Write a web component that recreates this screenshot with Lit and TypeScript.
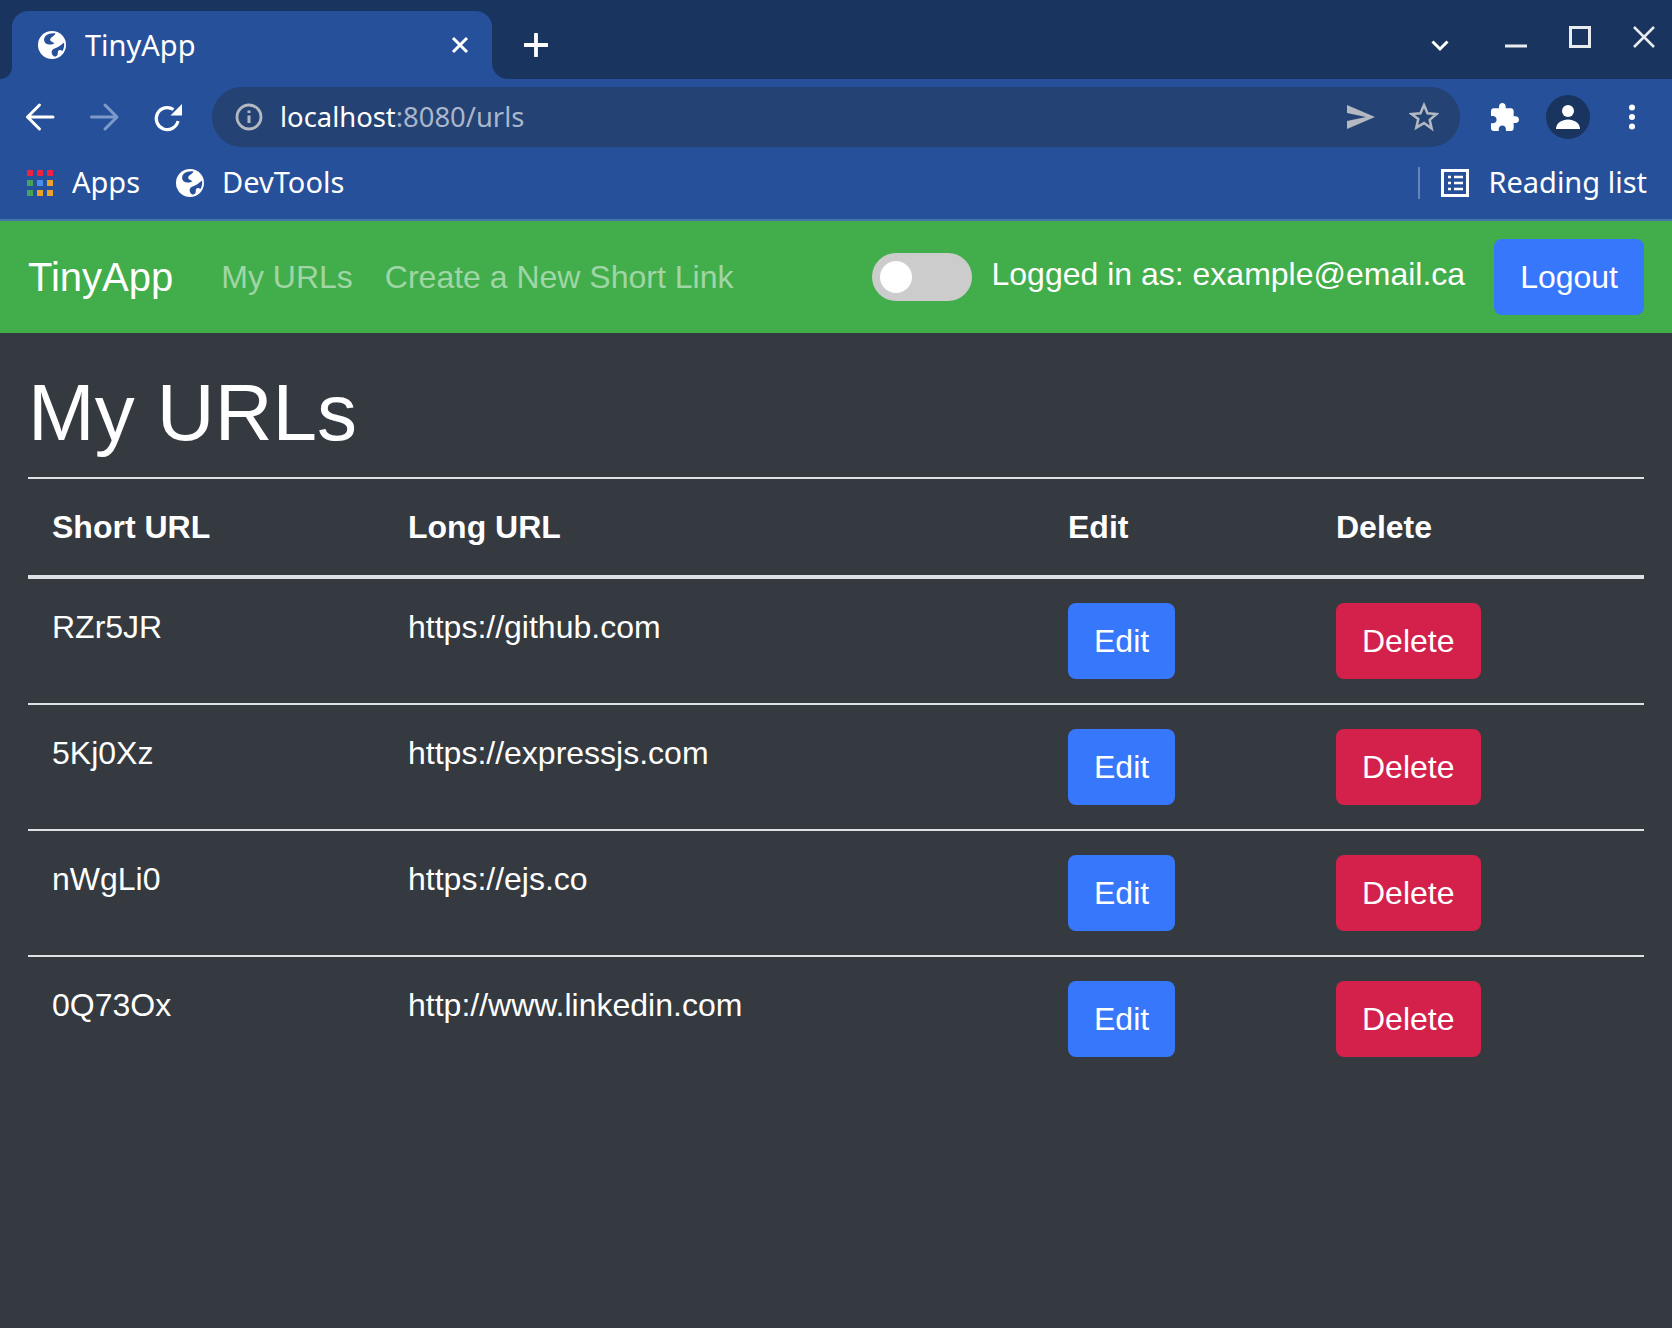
import { LitElement, html, css, svg } from "lit";
import { customElement } from "lit/decorators.js";

const globe = svg`<circle cx="14" cy="14" r="14" fill="#fff"/><path fill="#27509a" d="M8 4.500C10.500 2.600 14 1.800 17.500 2.300 17 4 15.500 5 14 6c-2 1.300-2.500 3-1 4.200 1 .8 2.500 1.100 3.500 2.100-2.500 1.700-6.500 1.700-8.500.2-2.500-2-2.500-5.500 0-8z"/><path fill="#27509a" d="M26 11.500c.6 2.500 0 6-1.500 8.500-1.500-1-3-1.500-4-.5s-.5 3-1 4.500c-1 1.200-2.500 1.800-3.500 1.500-2-1.500-3-4-2-6s4-2.500 6-3.500c2.500-1.200 4-3 6-4.500z"/>`;

const urls = [
  ["RZr5JR", "https://github.com"],
  ["5Kj0Xz", "https://expressjs.com"],
  ["nWgLi0", "https://ejs.co"],
  ["0Q73Ox", "http://www.linkedin.com"],
];

const appsColors = ["#ee2244", "#ee2244", "#ee2244", "#45a35a", "#4a8ff0", "#eba12c", "#45a35a", "#eba12c", "#eba12c"];

@customElement("app-root")
export class AppRoot extends LitElement {
  static styles = css`
    :host {
      display: flex;
      flex-direction: column;
      min-height: 1328px;
      background: #343a40;
      font-family: "Liberation Sans", Arial, sans-serif;
      color: #fff;
    }
    * { box-sizing: border-box; }

    /* browser frame */
    .chrome { font-family: "Noto Sans", sans-serif; color: #fff; }
    .tabbar {
      height: 79px;
      background: #19355f;
      display: flex;
      align-items: flex-end;
      padding-left: 12px;
    }
    .tab {
      width: 480px;
      height: 68px;
      background: #27509a;
      border-radius: 16px 16px 0 0;
      display: flex;
      align-items: center;
      padding: 0 0 0 26px;
      position: relative;
      font-size: 29px;
    }
    .tab::before, .tab::after {
      content: "";
      position: absolute;
      bottom: 0;
      width: 16px;
      height: 16px;
    }
    .tab::before {
      left: -12px;
      width: 12px;
      height: 12px;
      background: radial-gradient(circle at 0 0, #19355f 11.5px, #27509a 12.5px);
    }
    .tab::after {
      right: -16px;
      background: radial-gradient(circle at 100% 0, #19355f 15.5px, #27509a 16.5px);
    }
    .tab .globe { width: 28px; height: 28px; margin-right: 19px; flex: none; }
    .tab .title { flex: 1; margin-bottom: 2px; }
    .tab .close { width: 20px; height: 20px; margin-right: 22px; flex: none; }
    .plus { width: 24px; height: 24px; margin: 0 0 22px 32px; flex: none; }
    .winctl { margin-left: auto; flex: none; display: block; }
    .toolbar {
      height: 76px;
      background: #27509a;
      display: flex;
      align-items: center;
      padding-left: 24px;
    }
    .navbtn { width: 64px; height: 32px; flex: none; display: block; }
    .navbtn.reload { width: 60px; }
    .urlbar {
      flex: 1;
      height: 60px;
      border-radius: 30px;
      background: #244273;
      display: flex;
      align-items: center;
      font-size: 27.4px;
      padding-left: 23px;
    }
    .urlbar .info { width: 28px; height: 28px; margin-right: 17px; flex: none; }
    .urlbar .addr { margin-bottom: 2px; }
    .urlbar .host { color: #fff; }
    .urlbar .rest { color: #a9b6cc; }
    .urlbar .spacer { flex: 1; }
    .urlbar .send { width: 30px; height: 26px; margin-right: 33px; flex: none; }
    .urlbar .star { width: 30px; height: 30px; margin-right: 21px; flex: none; }
    .tools { display: flex; align-items: center; width: 212px; flex: none; }
    .tools .puzzle { width: 28px; height: 28px; margin-left: 31px; flex: none; }
    .avatar {
      width: 44px;
      height: 44px;
      margin-left: 27px;
      background: #19355f;
      border-radius: 50%;
      display: flex;
      align-items: center;
      justify-content: center;
      flex: none;
    }
    .avatar svg { width: 24px; height: 24px; display: block; }
    .tools .dots { width: 8px; height: 26px; margin-left: 38px; flex: none; }
    .bookmarks {
      height: 64px;
      background: #27509a;
      display: flex;
      align-items: center;
      padding: 0 25px 8px 27px;
      font-size: 29px;
    }
    .bookmarks .apps {
      width: 26px;
      height: 26px;
      display: grid;
      grid-template-columns: repeat(3, 6px);
      grid-template-rows: repeat(3, 6px);
      justify-content: space-between;
      align-content: space-between;
      margin-right: 19px;
      flex: none;
    }
    .bookmarks .text { margin-bottom: 4px; }
    .bookmarks .globe { width: 28px; height: 28px; margin: 0 18px 0 36px; flex: none; }
    .bookmarks .spacer { flex: 1; }
    .bookmarks .sep { width: 2px; height: 32px; background: #6685b8; margin-right: 21px; flex: none; }
    .bookmarks .list { width: 28px; height: 28px; margin-right: 19px; flex: none; }
    .edge { height: 2px; background: #4675ad; }

    /* navbar */
    .navbar {
      height: 112px;
      background: #41ad4b;
      display: flex;
      align-items: center;
      padding: 0 28px;
      font-size: 32px;
    }
    .brand { font-size: 40px; line-height: 60px; margin-right: 48px; }
    .link { color: rgba(255, 255, 255, 0.5); line-height: 48px; margin-right: 32px; }
    .spacer { flex: 1; }
    .switch {
      width: 100px;
      height: 48px;
      border-radius: 24px;
      background: #ccc;
      padding: 8px;
      margin-right: 19px;
      flex: none;
    }
    .knob { width: 32px; height: 32px; border-radius: 50%; background: #fff; }
    .who { line-height: 48px; margin: 0 29px 6px 0; }
    .btn {
      display: inline-block;
      border: 2px solid transparent;
      border-radius: 8px;
      padding: 12px 24px;
      line-height: 48px;
      font-size: 32px;
      color: #fff;
      font-family: inherit;
      background: #3777fb;
      flex: none;
    }
    .btn.danger { background: #d3214c; }

    /* content */
    main { padding: 32px 28px 0; }
    h1 {
      margin: 0 0 16px;
      font-size: 80px;
      line-height: 96px;
      font-weight: 400;
    }
    table {
      width: 100%;
      table-layout: fixed;
      border-collapse: collapse;
      border-top: 2px solid #dee2e6;
      font-size: 32px;
      line-height: 48px;
    }
    .c1 { width: 356px; }
    .c2 { width: 660px; }
    .c3 { width: 268px; }
    .c4 { width: 332px; }
    th, td { padding: 24px; text-align: left; vertical-align: top; }
    th { font-weight: 700; border-bottom: 4px solid #dee2e6; }
    td { border-bottom: 2px solid #dee2e6; }
    tr:last-child td { border-bottom: 0; }
  `;

  render() {
    return html`
      <div class="chrome">
        <div class="tabbar">
          <div class="tab">
            <svg class="globe" viewBox="0 0 28 28">${globe}</svg>
            <span class="title">TinyApp</span>
            <svg class="close" viewBox="0 0 20 20"><path d="M3 3l14 14M17 3L3 17" stroke="#fff" stroke-width="3"/></svg>
          </div>
          <svg class="plus" viewBox="0 0 24 24"><path d="M12 1v22M1 12h22" stroke="#fff" stroke-width="3.800" stroke-linecap="round"/></svg>
          <svg class="winctl" width="252" height="79" viewBox="1420 0 252 79">
            <path d="M1432.500 41.500l7.500 7.500 7.500-7.500" fill="none" stroke="#fff" stroke-width="3"/>
            <rect x="1505" y="44.500" width="22" height="3" fill="#e8ebf0"/>
            <rect x="1570.500" y="27.500" width="19" height="19" fill="none" stroke="#e8ebf0" stroke-width="3"/>
            <path d="M1634 27l20 20M1654 27l-20 20" stroke="#e8ebf0" stroke-width="2.500"/>
          </svg>
        </div>
        <div class="toolbar">
          <svg class="navbtn" viewBox="0 0 64 32"><path d="M15.500 4l-12 12 12 12M3.500 16H29" fill="none" stroke="#fff" stroke-width="3" stroke-linecap="round" stroke-linejoin="round"/></svg>
          <svg class="navbtn" viewBox="0 0 64 32"><path d="M17 4l12 12-12 12M29 16H3.500" fill="none" stroke="#7e9ac8" stroke-width="3" stroke-linecap="round" stroke-linejoin="round"/></svg>
          <svg class="navbtn reload" viewBox="0 0 60 32"><path d="M21.500 8.500A11 11 0 1 0 26 20" fill="none" stroke="#fff" stroke-width="3.200"/><path d="M30 3v11.500H18.500z" fill="#fff"/></svg>
          <div class="urlbar">
            <svg class="info" viewBox="0 0 28 28"><circle cx="14" cy="14" r="12" fill="none" stroke="#b4b9c1" stroke-width="2.800"/><path d="M14 12.500v7.500M14 7.500v2.500" stroke="#b4b9c1" stroke-width="3"/></svg>
            <span class="addr"><span class="host">localhost</span><span class="rest">:8080/urls</span></span>
            <span class="spacer"></span>
            <svg class="send" viewBox="0 0 30 26"><path d="M1 1l28 12L1 25v-8l19-4L1 9z" fill="#b4b9c1"/></svg>
            <svg class="star" viewBox="0 0 30 30"><path d="M15 3l3.500 8.200 8.900.8-6.700 5.900 2 8.700L15 21.100l-7.700 4.500 2-8.700L2.600 12l8.900-.8z" fill="none" stroke="#b4b9c1" stroke-width="2.500"/></svg>
          </div>
          <div class="tools">
            <svg class="puzzle" viewBox="2 1 21 21"><path fill="#fff" d="M20.500 11H19V7c0-1.100-.9-2-2-2h-4V3.500C13 2.120 11.880 1 10.500 1S8 2.120 8 3.500V5H4c-1.100 0-1.990.9-1.990 2v3.800H3.500c1.490 0 2.700 1.210 2.700 2.700s-1.210 2.700-2.700 2.700H2V20c0 1.100.9 2 2 2h3.800v-1.500c0-1.490 1.210-2.700 2.700-2.700s2.700 1.210 2.700 2.700V22H17c1.100 0 2-.9 2-2v-4h1.500c1.380 0 2.500-1.120 2.500-2.500S21.880 11 20.500 11z"/></svg>
            <div class="avatar"><svg viewBox="0 0 24 24"><circle cx="12" cy="6" r="6" fill="#fff"/><path d="M0 24c0-6 6-9.500 12-9.500s12 3.500 12 9.500z" fill="#fff"/></svg></div>
            <svg class="dots" viewBox="0 0 8 26"><circle cx="4" cy="3.500" r="3" fill="#fff"/><circle cx="4" cy="13" r="3" fill="#fff"/><circle cx="4" cy="22.500" r="3" fill="#fff"/></svg>
          </div>
        </div>
        <div class="bookmarks">
          <div class="apps">${appsColors.map((c) => html`<i style="background:${c}"></i>`)}</div>
          <span class="text">Apps</span>
          <svg class="globe" viewBox="0 0 28 28">${globe}</svg>
          <span class="text">DevTools</span>
          <span class="spacer"></span>
          <span class="sep"></span>
          <svg class="list" viewBox="0 0 28 28"><rect x="1.500" y="1.500" width="25" height="25" fill="none" stroke="#fff" stroke-width="3"/><path d="M7 8h3M13 8h9M7 14h3M13 14h9M7 20h3M13 20h9" stroke="#fff" stroke-width="2.500"/></svg>
          <span class="text">Reading list</span>
        </div>
        <div class="edge"></div>
      </div>
      <nav class="navbar">
        <span class="brand">TinyApp</span>
        <span class="link">My URLs</span>
        <span class="link">Create a New Short Link</span>
        <span class="spacer"></span>
        <div class="switch"><div class="knob"></div></div>
        <span class="who">Logged in as: example@email.ca</span>
        <span class="btn">Logout</span>
      </nav>
      <main>
        <h1>My URLs</h1>
        <table>
          <colgroup><col class="c1" /><col class="c2" /><col class="c3" /><col class="c4" /></colgroup>
          <thead><tr><th>Short URL</th><th>Long URL</th><th>Edit</th><th>Delete</th></tr></thead>
          <tbody>
            ${urls.map(
              ([s, l]) => html`<tr>
                <td>${s}</td>
                <td>${l}</td>
                <td><span class="btn">Edit</span></td>
                <td><span class="btn danger">Delete</span></td>
              </tr>`
            )}
          </tbody>
        </table>
      </main>
    `;
  }
}
